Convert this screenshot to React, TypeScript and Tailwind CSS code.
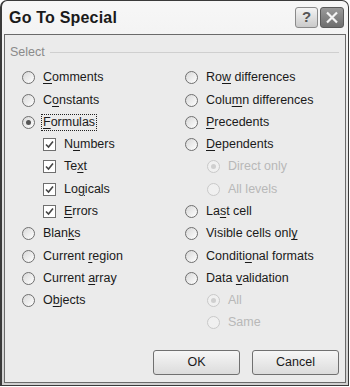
import React from "react";

type Item = {
  label: string;
  key: number;
  kind: "radio" | "check";
  checked?: boolean;
  disabled?: boolean;
  indent?: boolean;
  focus?: boolean;
};

const left: Item[] = [
  { label: "Comments", key: 0, kind: "radio" },
  { label: "Constants", key: 1, kind: "radio" },
  { label: "Formulas", key: 0, kind: "radio", checked: true, focus: true },
  { label: "Numbers", key: 1, kind: "check", checked: true, indent: true },
  { label: "Text", key: 2, kind: "check", checked: true, indent: true },
  { label: "Logicals", key: 2, kind: "check", checked: true, indent: true },
  { label: "Errors", key: 0, kind: "check", checked: true, indent: true },
  { label: "Blanks", key: 4, kind: "radio" },
  { label: "Current region", key: 8, kind: "radio" },
  { label: "Current array", key: 8, kind: "radio" },
  { label: "Objects", key: 1, kind: "radio" },
];

const right: Item[] = [
  { label: "Row differences", key: 2, kind: "radio" },
  { label: "Column differences", key: 4, kind: "radio" },
  { label: "Precedents", key: 0, kind: "radio" },
  { label: "Dependents", key: 0, kind: "radio" },
  { label: "Direct only", key: -1, kind: "radio", checked: true, disabled: true, indent: true },
  { label: "All levels", key: -1, kind: "radio", disabled: true, indent: true },
  { label: "Last cell", key: 2, kind: "radio" },
  { label: "Visible cells only", key: 17, kind: "radio" },
  { label: "Conditional formats", key: 7, kind: "radio" },
  { label: "Data validation", key: 5, kind: "radio" },
  { label: "All", key: -1, kind: "radio", checked: true, disabled: true, indent: true },
  { label: "Same", key: -1, kind: "radio", disabled: true, indent: true },
];

const Label = ({ text, k }: { text: string; k: number }) => {
  if (k < 0) return <>{text}</>;
  return (
    <>
      {text.slice(0, k)}
      <span className="underline underline-offset-2">{text[k]}</span>
      {text.slice(k + 1)}
    </>
  );
};

const Radio = ({ checked, disabled }: { checked?: boolean; disabled?: boolean }) => (
  <span
    className={`flex h-[13px] w-[13px] shrink-0 items-center justify-center rounded-full border ${
      disabled
        ? "border-[#c9c9c9] bg-[#f0f0f0]"
        : "border-[#6f6f6f] bg-gradient-to-br from-[#d8d8d8] to-white"
    }`}
  >
    {checked && (
      <span
        className={`h-[5px] w-[5px] rounded-full ${disabled ? "bg-[#cfcfcf]" : "bg-[#555]"}`}
      />
    )}
  </span>
);

const Check = () => (
  <span className="flex h-[13px] w-[13px] shrink-0 items-center justify-center border border-[#6f6f6f] bg-white">
    <svg width="9" height="9" viewBox="0 0 9 9">
      <path d="M1 4.5 L3.5 7 L8 1.5" fill="none" stroke="#444" strokeWidth="1.6" />
    </svg>
  </span>
);

const Row = ({ item, col }: { item: Item; col: "l" | "r" }) => (
  <div
    className={`flex h-[22.27px] items-center ${
      item.indent ? (col === "l" ? "pl-[21px]" : "pl-[22px]") : ""
    } ${item.disabled ? "text-[#b8b8b8]" : "text-[#1a1a1a]"}`}
  >
    {item.kind === "radio" ? <Radio checked={item.checked} disabled={item.disabled} /> : <Check />}
    <span
      className={`ml-[6px] leading-[15px] ${
        item.focus ? "border border-dotted border-[#222] px-[1px]" : "px-[2px]"
      }`}
    >
      <Label text={item.label} k={item.key} />
    </span>
  </div>
);

export default function App() {
  return (
    <div
      className="h-[387px] w-[350px] bg-white"
      style={{ fontFamily: '"Liberation Sans", Arial, sans-serif' }}
    >
      <div className="flex h-[386px] w-[349px] flex-col rounded-t-[7px] border border-[#3a3a3a] border-l-2 bg-gradient-to-b from-[#f7f7f7] via-[#e2e2e2] to-[#d0d0d0]">
        <div className="flex h-[33px] shrink-0 items-center justify-between pl-[7px] pr-[4px]">
          <span className="text-[16px] font-bold tracking-[0.2px] text-[#1a1a1a]">Go To Special</span>
          <div className="flex gap-[2px] pb-[1px]">
            <div className="flex h-[21px] w-[23px] items-center justify-center rounded-[3px] border border-[#8a8a8a] bg-gradient-to-b from-[#f4f4f4] to-[#cacaca] text-[15px] font-bold text-[#555]">
              ?
            </div>
            <div className="flex h-[21px] w-[24px] items-center justify-center rounded-[3px] border border-[#5a5a5a] bg-gradient-to-b from-[#9a9a9a] to-[#6e6e6e]">
              <svg width="14" height="13" viewBox="0 0 14 13">
                <path d="M2 1.5 L12 11.5 M12 1.5 L2 11.5" stroke="#f4f4f4" strokeWidth="2.2" />
              </svg>
            </div>
          </div>
        </div>
        <div className="mx-[2px] mb-[2px] flex flex-1 flex-col border border-[#6a6a6a] bg-[#ebebeb] text-[12.5px]">
          <div className="flex items-center pl-[5px] pr-[6px] pt-[8px]">
            <span className="text-[12.5px] text-[#8a8a8a]">Select</span>
            <span className="ml-[5px] h-px flex-1 border-t border-[#cfcfcf]" />
          </div>
          <div className="grid grid-cols-[163px_1fr] pl-[17px] pt-[5px]">
            <div className="flex flex-col">
              {left.map((it) => (
                <Row key={it.label} item={it} col="l" />
              ))}
            </div>
            <div className="flex flex-col">
              {right.map((it, i) => (
                <Row key={it.label + i} item={it} col="r" />
              ))}
            </div>
          </div>
          <div className="mt-auto flex justify-end gap-[12px] pb-[7px] pr-[6px]">
            <button className="h-[25px] w-[87px] rounded-[3px] border border-[#707070] bg-gradient-to-b from-[#f6f6f6] to-[#dcdcdc] text-[12.5px] text-[#1a1a1a]">
              OK
            </button>
            <button className="h-[25px] w-[87px] rounded-[3px] border border-[#707070] bg-gradient-to-b from-[#f6f6f6] to-[#dcdcdc] text-[12.5px] text-[#1a1a1a]">
              Cancel
            </button>
          </div>
        </div>
      </div>
    </div>
  );
}
